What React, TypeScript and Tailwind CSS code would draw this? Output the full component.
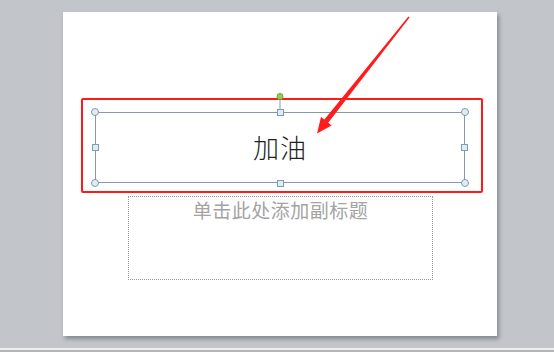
import React from "react";

const Circle = () => <div className="w-[8px] h-[8px] rounded-full bg-[#dcedf3] border border-[#8399ad]" />;

const Square = () => <div className="w-[7px] h-[7px] bg-[#dcedf3] border border-[#8399ad]" />;

export default function App() {
  return (
    <div className="relative w-[554px] h-[352px] overflow-hidden bg-[#c2c5ca] flex flex-col font-['Noto_Sans_CJK_SC',sans-serif]">
      {/* slide */}
      <div className="ml-[63px] mt-[12px] w-[434px] h-[324px] bg-white shadow-[2px_3px_4px_rgba(60,66,75,0.45)] pt-[86px] pl-[18px]">
        {/* title frame, highlighted in red */}
        <div className="w-[402px] h-[95px] border-2 border-[#ff1a1a] rounded-[2px] pt-[12px] pl-[12px]">
          <div className="relative w-[370px] h-[71px] border border-[#8399ad] flex items-center justify-center">
            <span className="text-[26px] leading-none text-[#222] font-light tracking-[1px] mb-[2px]">加油</span>
            {/* selection handles */}
            <div className="absolute inset-[-5px] flex flex-col justify-between">
              <div className="flex justify-between items-center">
                <Circle />
                <div className="relative">
                  <Square />
                  <div className="absolute left-1/2 -translate-x-1/2 bottom-full flex flex-col items-center">
                    <div className="w-[7px] h-[7px] rounded-full bg-[#92d050] border border-[#6f9e3c]" />
                    <div className="w-px h-[9px] bg-[#8399ad]" />
                  </div>
                </div>
                <Circle />
              </div>
              <div className="flex justify-between items-center px-px">
                <Square />
                <Square />
              </div>
              <div className="flex justify-between items-center">
                <Circle />
                <Square />
                <Circle />
              </div>
            </div>
          </div>
        </div>
        {/* subtitle placeholder */}
        <div className="ml-[47px] mt-[3px] w-[305px] h-[84px] border border-dotted border-[#9a9a9a] flex justify-center pt-[1px]">
          <span className="text-[19px] leading-[24px] text-[#a3a3a3] tracking-[0.5px]">单击此处添加副标题</span>
        </div>
      </div>
      {/* bottom edge */}
      <div className="mt-auto h-[4px] border-t-2 border-[#eceef0] bg-[#b3b5b8]" />

      {/* red arrow annotation */}
      <svg className="absolute left-0 top-0 pointer-events-none" width="554" height="352">
        <polygon
          points="409.6,17.5 408.4,16.5 324.4,119.6 321,117 317,133.5 331.6,125.5 328.2,122.7"
          fill="#ff1c1c"
        />
      </svg>
    </div>
  );
}
